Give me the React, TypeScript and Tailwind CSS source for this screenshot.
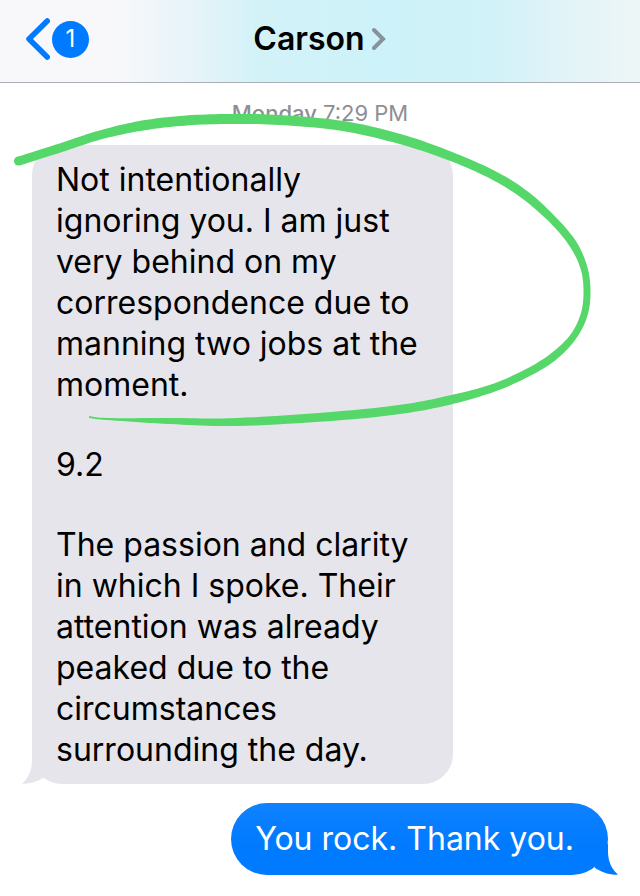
const paragraphs = [
  [
    "Not intentionally",
    "ignoring you. I am just",
    "very behind on my",
    "correspondence due to",
    "manning two jobs at the",
    "moment.",
  ],
  ["9.2"],
  [
    "The passion and clarity",
    "in which I spoke. Their",
    "attention was already",
    "peaked due to the",
    "circumstances",
    "surrounding the day.",
  ],
];

// Marker stroke: x, y, thickness
const marker = [
  [19, 161, 9], [60, 148, 9], [100, 135, 9], [140, 126, 10], [180, 121, 10], [225, 119, 10],
  [280, 120, 10], [343, 126, 10], [400, 139, 10], [450, 156, 9], [493, 175, 9], [525, 195, 9],
  [553, 220, 8], [573, 244, 8], [584, 268, 7], [587, 292, 7], [584, 315, 7], [573, 337, 7],
  [553, 357, 8], [527, 373, 8], [493, 388, 8], [450, 400, 9], [403, 409, 9], [337, 416, 9],
  [237, 422, 8], [170, 421, 6], [107, 419, 2], [89, 417, 2],
];

// Turns the marker points into a closed outline that follows their thickness
function markerPath() {
  const left: string[] = [];
  const right: string[] = [];
  const steps = 10;

  for (let i = 0; i < marker.length - 1; i++) {
    const a = marker[Math.max(i - 1, 0)];
    const b = marker[i];
    const c = marker[i + 1];
    const d = marker[Math.min(i + 2, marker.length - 1)];
    for (let s = 0; s <= steps; s++) {
      const t = s / steps;
      const at = (k: number) =>
        0.5 * (2 * b[k] + (c[k] - a[k]) * t + (2 * a[k] - 5 * b[k] + 4 * c[k] - d[k]) * t * t + (3 * b[k] - a[k] - 3 * c[k] + d[k]) * t * t * t);
      const slope = (k: number) =>
        0.5 * (c[k] - a[k] + 2 * (2 * a[k] - 5 * b[k] + 4 * c[k] - d[k]) * t + 3 * (3 * b[k] - a[k] - 3 * c[k] + d[k]) * t * t);
      const dx = slope(0);
      const dy = slope(1);
      const len = Math.hypot(dx, dy) || 1;
      const half = at(2) / 2;
      left.push(`${at(0) - (dy / len) * half} ${at(1) + (dx / len) * half}`);
      right.unshift(`${at(0) + (dy / len) * half} ${at(1) - (dx / len) * half}`);
    }
  }
  return `M${[...left, ...right].join("L")}Z`;
}

const BackIcon = () => (
  <svg className="w-6 h-11" viewBox="0 0 24 44" fill="none" stroke="currentColor" aria-hidden="true">
    <path strokeLinecap="round" strokeLinejoin="round" strokeWidth={5.5} d="M21.2 4L3 22L21.2 40" />
  </svg>
);

const ChevronIcon = () => (
  <svg className="w-4 h-6 text-[#87929c]" viewBox="0 0 16 24" fill="none" stroke="currentColor" aria-hidden="true">
    <path strokeLinecap="round" strokeLinejoin="miter" strokeWidth={4} d="M3 3L12 12L3 21" />
  </svg>
);

const TailIcon = ({ className }: { className: string }) => (
  <svg className={className} viewBox="0 0 24 32" fill="currentColor" aria-hidden="true">
    <path d="M10 0V9C10 18 6 27 0 31.500C8 32.500 17 29 23.500 24.500L16 10Z" />
  </svg>
);

export default function App() {
  return (
    <div className="min-h-screen bg-white font-['Inter','Liberation_Sans',sans-serif] text-black">
      <header className="grid grid-cols-[1fr_auto_1fr] items-center px-[26px] h-[83px] pb-1 border-b border-[#a9afb3] bg-[linear-gradient(to_right,#f8f8fa_0%,#f8f8fa_18%,#e8f4f9_29%,#d3f2f8_40%,#cdf2f9_60%,#d0f2f8_76%,#e0f3f8_87%,#edf6f6_100%)]">
        <button type="button" aria-label="Back, 1 unread" className="flex items-center gap-0.5 text-[#007aff] justify-self-start">
          <BackIcon />
          <span className="flex items-center justify-center w-[37px] h-[37px] text-2xl text-white rounded-full bg-[#007aff]">
            1
          </span>
        </button>
        <button type="button" className="flex items-center gap-1.5">
          <h1 className="text-[32px] leading-10 font-semibold">Carson</h1>
          <ChevronIcon />
        </button>
      </header>

      <main className="relative pt-4 pb-5">
        <p className="text-[22px] leading-7 text-center text-[#8e8e93]">
          <span className="font-medium">Monday</span> 7:29 PM
        </p>

        {/* Received */}
        <div className="flex px-8 mt-[18px]">
          <div className="relative w-full max-w-[421px] px-6 py-[14px] rounded-[30px] bg-[#e6e5eb]">
            <div className="flex flex-col gap-[39px] text-[32px] leading-[41px] whitespace-pre">
              {paragraphs.map((lines) => (
                <p key={lines[0]}>{lines.join("\n")}</p>
              ))}
            </div>
            <TailIcon className="absolute bottom-0 -left-[10px] w-6 h-8 text-[#e6e5eb]" />
          </div>
        </div>

        {/* Sent */}
        <div className="flex justify-end px-8 mt-[19px]">
          <div className="relative pl-6 pr-[34px] py-4 rounded-[36px] bg-linear-to-b from-[#0f82ff] to-[#007aff] to-60% text-white text-[32px] leading-10">
            <p>You rock. Thank you.</p>
            <TailIcon className="absolute bottom-0 -right-[10px] w-6 h-8 text-[#007aff] -scale-x-100" />
          </div>
        </div>

        {/* Marker circle */}
        <svg className="absolute top-0 left-0 w-[640px] h-[360px] pointer-events-none" viewBox="0 83 640 360" fill="#55d769" aria-hidden="true">
          <path d={markerPath()} />
          <circle cx="18.500" cy="161" r="4.500" />
        </svg>
      </main>
    </div>
  );
}
